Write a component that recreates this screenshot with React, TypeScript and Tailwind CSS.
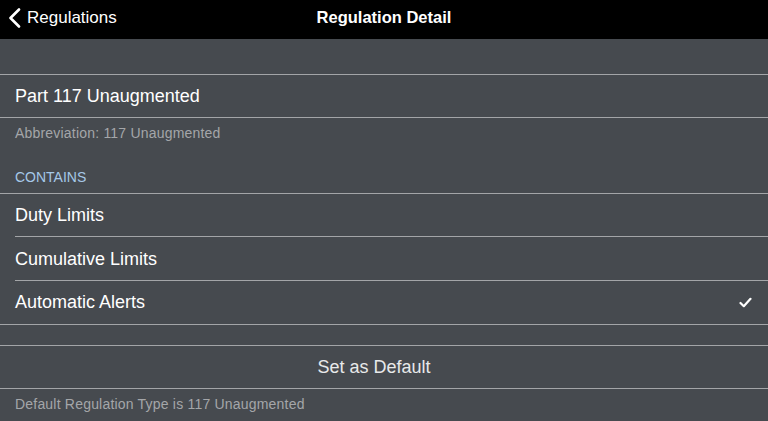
export default function App() {
  return (
    <div className="w-[768px] h-[421px] overflow-hidden bg-[#464a4f] text-white font-['Liberation_Sans',Arial,sans-serif]">
      <header className="relative flex items-center justify-center h-[39px] pb-[4px] bg-black">
        <div className="absolute left-[8px] top-0 h-full pb-[4px] flex items-center gap-[6px]">
          <svg width="13" height="20" viewBox="0 0 13 20" fill="none">
            <path d="M11 1.5 L2.5 10 L11 18.5" stroke="white" strokeWidth="2.6" strokeLinecap="round" strokeLinejoin="round" />
          </svg>
          <span className="text-[17px] leading-none">Regulations</span>
        </div>
        <h1 className="text-[16.5px] font-bold leading-none">Regulation Detail</h1>
      </header>

      <main>
        <div className="h-[35px]" />
        <section className="border-t border-b border-[#a3a5a8]">
          <div className="h-[42px] flex items-center px-[15px] text-[18px]">Part 117 Unaugmented</div>
        </section>
        <p className="h-[31px] flex items-center px-[15px] text-[14px] tracking-[0.2px] text-[#a4a6a9]">
          Abbreviation: 117 Unaugmented
        </p>
        <h2 className="h-[44px] flex items-end pb-[5px] px-[15px] text-[14px] text-[#a5c8e8]">CONTAINS</h2>
        <section className="border-t border-b border-[#a3a5a8]">
          <div className="h-[43px] flex items-center px-[15px] text-[18px] relative">
            Duty Limits
            <span className="absolute left-[15px] right-0 bottom-0 h-px bg-[#a3a5a8]" />
          </div>
          <div className="h-[44px] flex items-center px-[15px] text-[18px] relative">
            Cumulative Limits
            <span className="absolute left-[15px] right-0 bottom-0 h-px bg-[#a3a5a8]" />
          </div>
          <div className="h-[43px] flex items-center justify-between pl-[15px] pr-[16px] text-[18px]">
            <span>Automatic Alerts</span>
            <svg width="13" height="11" viewBox="0 0 13 11" fill="none">
              <path d="M1.5 6 L4.8 9.2 L11.5 1.8" stroke="white" strokeWidth="2.2" strokeLinecap="round" strokeLinejoin="round" />
            </svg>
          </div>
        </section>
        <div className="h-[20px]" />
        <section className="border-t border-b border-[#a3a5a8]">
          <div className="h-[42px] flex items-center justify-center pr-[20px] text-[18px] text-[#e8e9ea]">Set as Default</div>
        </section>
        <p className="h-[31px] flex items-center px-[15px] text-[14px] tracking-[0.2px] text-[#a4a6a9]">
          Default Regulation Type is 117 Unaugmented
        </p>
      </main>
    </div>
  );
}
